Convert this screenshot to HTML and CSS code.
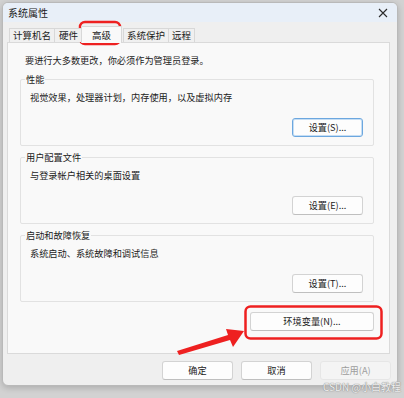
FILE: index.html
```html
<!DOCTYPE html>
<html lang="zh-CN">
<head>
    <meta charset="UTF-8">
    <title>系统属性</title>
    <link rel="stylesheet" href="styles.css">
</head>
<body>

<div class="window">
    <!-- Title bar -->
    <div class="titlebar">
        <span class="title">系统属性</span>
        <svg class="close" width="10" height="10" viewBox="0 0 10 10">
            <path d="M1 1L9 9M9 1L1 9" stroke="#2b2b2b" stroke-width="1.1" fill="none"/>
        </svg>
    </div>

    <!-- Tabs -->
    <div class="tabs">
        <div class="tab">计算机名</div>
        <div class="tab">硬件</div>
        <div class="tab active">高级</div>
        <div class="tab">系统保护</div>
        <div class="tab">远程</div>
    </div>

    <!-- Tab page -->
    <div class="panel">
        <p class="note">要进行大多数更改，你必须作为管理员登录。</p>

        <div class="group">
            <span class="group-title">性能</span>
            <p class="group-text">视觉效果，处理器计划，内存使用，以及虚拟内存</p>
            <div class="group-actions">
                <button class="btn default">设置(S)...</button>
            </div>
        </div>

        <div class="group">
            <span class="group-title">用户配置文件</span>
            <p class="group-text">与登录帐户相关的桌面设置</p>
            <div class="group-actions">
                <button class="btn">设置(E)...</button>
            </div>
        </div>

        <div class="group last">
            <span class="group-title">启动和故障恢复</span>
            <p class="group-text">系统启动、系统故障和调试信息</p>
            <div class="group-actions">
                <button class="btn">设置(T)...</button>
            </div>
        </div>

        <div class="env-row">
            <button class="btn env">环境变量(N)...</button>
        </div>
    </div>

    <!-- Dialog buttons -->
    <div class="footer">
        <button class="btn">确定</button>
        <button class="btn">取消</button>
        <button class="btn disabled">应用(A)</button>
    </div>
</div>

<!-- Red annotations drawn over the screenshot -->
<svg class="marks" width="404" height="398" viewBox="0 0 404 398">
    <rect x="80" y="22" width="40" height="22" rx="5" fill="none" stroke="#ee2020" stroke-width="2.5"/>
    <rect x="245.5" y="306.5" width="136" height="32" rx="5" fill="none" stroke="#ee2020" stroke-width="2.5"/>
    <polygon points="177,351 228,335 226,329 244,331 233,347 230,340 179,355" fill="#ee2020"/>
</svg>

<div class="watermark">CSDN @小白教程</div>

</body>
</html>
```

FILE: styles.css
```css
body {
    margin: 0;
    background-color: #d2d2d2;
    font-family: "Noto Sans CJK SC", "Noto Sans", sans-serif;
    font-size: 9.2px;
    color: #1b1b1b;
    width: 404px;
    height: 398px;
    overflow: hidden;
}

.window {
    margin: 2px 0 0 2px;
    width: 396px;
    height: 384px;
    box-sizing: border-box;
    background-color: #efefef;
    border: 1px solid #b9b9b9;
    border-radius: 6px;
    box-shadow: 0 2px 6px rgba(0, 0, 0, 0.18);
    overflow: hidden;
    display: flex;
    flex-direction: column;
}

.titlebar {
    height: 19px;
    background-color: #e8eff8;
    display: flex;
    align-items: center;
    justify-content: space-between;
    padding: 0 9px 0 5px;
}

.title {
    font-size: 10px;
    line-height: 12px;
}

.close {
    display: block;
}

.tabs {
    height: 20px;
    display: flex;
    align-items: flex-end;
    padding-left: 6px;
    position: relative;
    z-index: 1;
}

.tab {
    height: 13px;
    line-height: 13px;
    padding: 0 3px;
    font-size: 9.5px;
    border: 1px solid #d8d8d8;
    border-bottom: none;
    margin-right: -1px;
    background-color: #f0f0f0;
}

.tab:nth-child(2) {
    padding: 0 4px;
}

.tab.active {
    height: 16px;
    line-height: 17px;
    padding: 0 10px;
    margin: 0 1px -1px -1px;
    background-color: #f9f9f9;
}

.panel {
    margin-left: 4px;
    width: 383px;
    height: 312px;
    box-sizing: border-box;
    background-color: #f9f9f9;
    border: 1px solid #dadada;
    padding: 0 15px 0 12px;
}

.note {
    margin: 11px 0 13px 5px;
    line-height: 12px;
}

.group {
    position: relative;
    height: 67px;
    box-sizing: border-box;
    border: 1px solid #e2e2e2;
    border-radius: 2px;
    padding: 11px 10px 8px 9px;
    margin-bottom: 11px;
    display: flex;
    flex-direction: column;
}

.group.last {
    margin-top: 1px;
    margin-bottom: 10px;
}

.group-title {
    position: absolute;
    top: -7px;
    left: 4px;
    line-height: 12px;
    padding: 0 1px;
    background-color: #f9f9f9;
}

.group-text {
    margin: 0;
    line-height: 12px;
}

.group-actions {
    margin-top: auto;
    display: flex;
    justify-content: flex-end;
}

.btn {
    width: 71px;
    height: 19px;
    box-sizing: border-box;
    font-family: inherit;
    font-size: 9.2px;
    color: #1b1b1b;
    background-color: #fdfdfd;
    border: 1px solid #d3d3d3;
    border-bottom-color: #bfbfbf;
    border-radius: 3px;
    padding: 0;
    line-height: 17px;
}

.btn.default {
    border: 1px solid #6ca7df;
    box-shadow: inset 0 0 0 1px #c6def4;
}

.env-row {
    display: flex;
    justify-content: flex-end;
}

.env {
    width: 124px;
}

.footer {
    display: flex;
    justify-content: flex-end;
    gap: 8px;
    padding: 7px 6px 0 0;
}

.btn.disabled {
    background-color: #f4f4f4;
    border-color: #e6e6e6;
    color: #9d9d9d;
}

.marks {
    position: absolute;
    left: 0;
    top: 0;
}

.watermark {
    position: absolute;
    left: 323px;
    top: 380px;
    font-size: 10px;
    line-height: 14px;
    color: #efefef;
    text-shadow: 0 0 1px #8a8a8a, 0 0 1px #8a8a8a;
}
```
